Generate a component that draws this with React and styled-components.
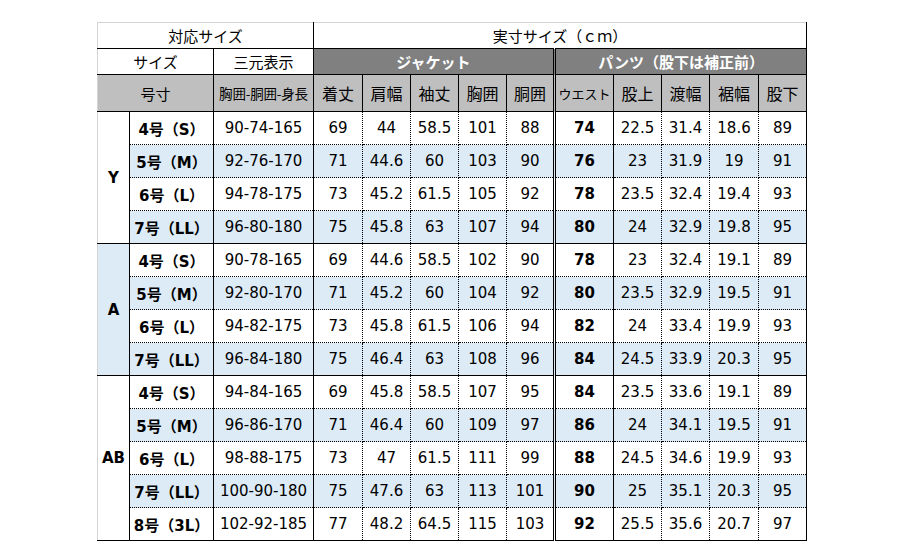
import styled, { createGlobalStyle, css } from "styled-components";

const GlobalStyle = createGlobalStyle`
  html, body {
    margin: 0;
    padding: 0;
    background: #fff;
  }
  body {
    font-family: "DejaVu Sans", "Noto Sans CJK JP", sans-serif;
    color: #000;
  }
`;

/**
 * data
 */
const COLS = [32, 84, 100, 49, 48, 48, 48, 48, 59, 48, 48, 49, 48];

const GROUPS = [
  {
    name: "Y",
    tint: false,
    rows: [
      ["4号（S）", "90-74-165", "69", "44", "58.5", "101", "88", "74", "22.5", "31.4", "18.6", "89"],
      ["5号（M）", "92-76-170", "71", "44.6", "60", "103", "90", "76", "23", "31.9", "19", "91"],
      ["6号（L）", "94-78-175", "73", "45.2", "61.5", "105", "92", "78", "23.5", "32.4", "19.4", "93"],
      ["7号（LL）", "96-80-180", "75", "45.8", "63", "107", "94", "80", "24", "32.9", "19.8", "95"],
    ],
  },
  {
    name: "A",
    tint: true,
    rows: [
      ["4号（S）", "90-78-165", "69", "44.6", "58.5", "102", "90", "78", "23", "32.4", "19.1", "89"],
      ["5号（M）", "92-80-170", "71", "45.2", "60", "104", "92", "80", "23.5", "32.9", "19.5", "91"],
      ["6号（L）", "94-82-175", "73", "45.8", "61.5", "106", "94", "82", "24", "33.4", "19.9", "93"],
      ["7号（LL）", "96-84-180", "75", "46.4", "63", "108", "96", "84", "24.5", "33.9", "20.3", "95"],
    ],
  },
  {
    name: "AB",
    tint: false,
    rows: [
      ["4号（S）", "94-84-165", "69", "45.8", "58.5", "107", "95", "84", "23.5", "33.6", "19.1", "89"],
      ["5号（M）", "96-86-170", "71", "46.4", "60", "109", "97", "86", "24", "34.1", "19.5", "91"],
      ["6号（L）", "98-88-175", "73", "47", "61.5", "111", "99", "88", "24.5", "34.6", "19.9", "93"],
      ["7号（LL）", "100-90-180", "75", "47.6", "63", "113", "101", "90", "25", "35.1", "20.3", "95"],
      ["8号（3L）", "102-92-185", "77", "48.2", "64.5", "115", "103", "92", "25.5", "35.6", "20.7", "97"],
    ],
  },
];

const JACKET = ["着丈", "肩幅", "袖丈", "胸囲", "胴囲"];
const PANTS = ["ウエスト", "股上", "渡幅", "裾幅", "股下"];

/**
 * styles
 */
const EDGE = "1px solid #d4d4d4";
const LINE = "1px solid #000";
const DOT = "1px dotted #000";
const DOUBLE = "3px double #000";

const Page = styled.div`
  padding: 22px 0 0 97px;
`;

const Table = styled.table`
  border-collapse: collapse;
  table-layout: fixed;
  width: 709px;
  font-size: 15px;
`;

const TopRow = styled.tr`
  height: 26px;
`;

const HeadRow = styled.tr`
  height: 37px;
`;

const DataRow = styled.tr`
  height: 33px;
  background: ${(p) => (p.$tint ? "#ddebf7" : "#fff")};
`;

const Caption = styled.td`
  text-align: center;
  vertical-align: middle;
  padding: 0;
  font-family: "Noto Sans CJK JP", sans-serif;
  font-size: 15px;
  border-top: ${(p) => (p.$top ? EDGE : "none")};
  border-left: ${(p) => (p.$first ? EDGE : "none")};
  border-right: ${(p) => (p.$double ? DOUBLE : LINE)};
  border-bottom: ${LINE};

  ${(p) =>
    p.$dark &&
    css`
      background: #808080;
      color: #fff;
      font-weight: 700;
    `}
`;

const HeadCell = styled.td`
  background: #bfbfbf;
  text-align: center;
  vertical-align: middle;
  padding: 0;
  font-family: "Noto Sans CJK JP", sans-serif;
  font-size: ${(p) => p.$size || 15}px;
  letter-spacing: ${(p) => (p.$tight ? "-0.2px" : "0")};
  white-space: nowrap;
  border: ${LINE};
  border-left: ${(p) => (p.$first ? EDGE : p.$double ? DOUBLE : LINE)};
`;

const GroupCell = styled.td`
  background: ${(p) => (p.$tint ? "#ddebf7" : "#fff")};
  text-align: center;
  vertical-align: middle;
  font-weight: 700;
  font-size: 15px;
  padding: 0;
  border-left: ${EDGE};
  border-right: ${LINE};
  border-bottom: ${LINE};
`;

const Cell = styled.td`
  text-align: center;
  vertical-align: middle;
  padding: 0;
  white-space: nowrap;
  font-weight: ${(p) => (p.$bold ? 700 : 400)};
  border-bottom: ${(p) => (p.$end ? LINE : DOT)};
  border-right: ${(p) => p.$right || DOT};
`;

// right border for each of the 11 value columns after the size label
const rightBorder = (i) => {
  if (i === 0) return LINE; // 三元表示
  if (i === 5) return DOUBLE; // 胴囲
  if (i === 6) return LINE; // ウエスト
  if (i === 10) return LINE; // 股下
  return DOT;
};

const App = () => (
  <Page>
    <GlobalStyle />
    <Table>
      <colgroup>
        {COLS.map((w, i) => (
          <col key={i} style={{ width: w }} />
        ))}
      </colgroup>
      <tbody>
        <TopRow>
          <Caption colSpan={3} $top $first>
            対応サイズ
          </Caption>
          <Caption colSpan={10} $top>
            実寸サイズ（ｃｍ）
          </Caption>
        </TopRow>
        <TopRow>
          <Caption colSpan={2} $first>
            サイズ
          </Caption>
          <Caption>三元表示</Caption>
          <Caption colSpan={5} $dark $double>
            ジャケット
          </Caption>
          <Caption colSpan={5} $dark>
            パンツ（股下は補正前）
          </Caption>
        </TopRow>
        <HeadRow>
          <HeadCell colSpan={2} $first>
            号寸
          </HeadCell>
          <HeadCell $size={13.5} $tight>
            胸囲-胴囲-身長
          </HeadCell>
          {JACKET.map((t) => (
            <HeadCell key={t} $size={16}>
              {t}
            </HeadCell>
          ))}
          {PANTS.map((t, i) => (
            <HeadCell key={t} $size={i === 0 ? 13 : 16} $double={i === 0}>
              {t}
            </HeadCell>
          ))}
        </HeadRow>
        {GROUPS.map((g) =>
          g.rows.map((row, r) => {
            const end = r === g.rows.length - 1;
            return (
              <DataRow key={g.name + r} $tint={r % 2 === 1}>
                {r === 0 && (
                  <GroupCell rowSpan={g.rows.length} $tint={g.tint}>
                    {g.name}
                  </GroupCell>
                )}
                <Cell $bold $end={end} $right={LINE}>
                  {row[0]}
                </Cell>
                {row.slice(1).map((v, i) => (
                  <Cell key={i} $end={end} $bold={i === 6} $right={rightBorder(i)}>
                    {v}
                  </Cell>
                ))}
              </DataRow>
            );
          })
        )}
      </tbody>
    </Table>
  </Page>
);

export default App;
